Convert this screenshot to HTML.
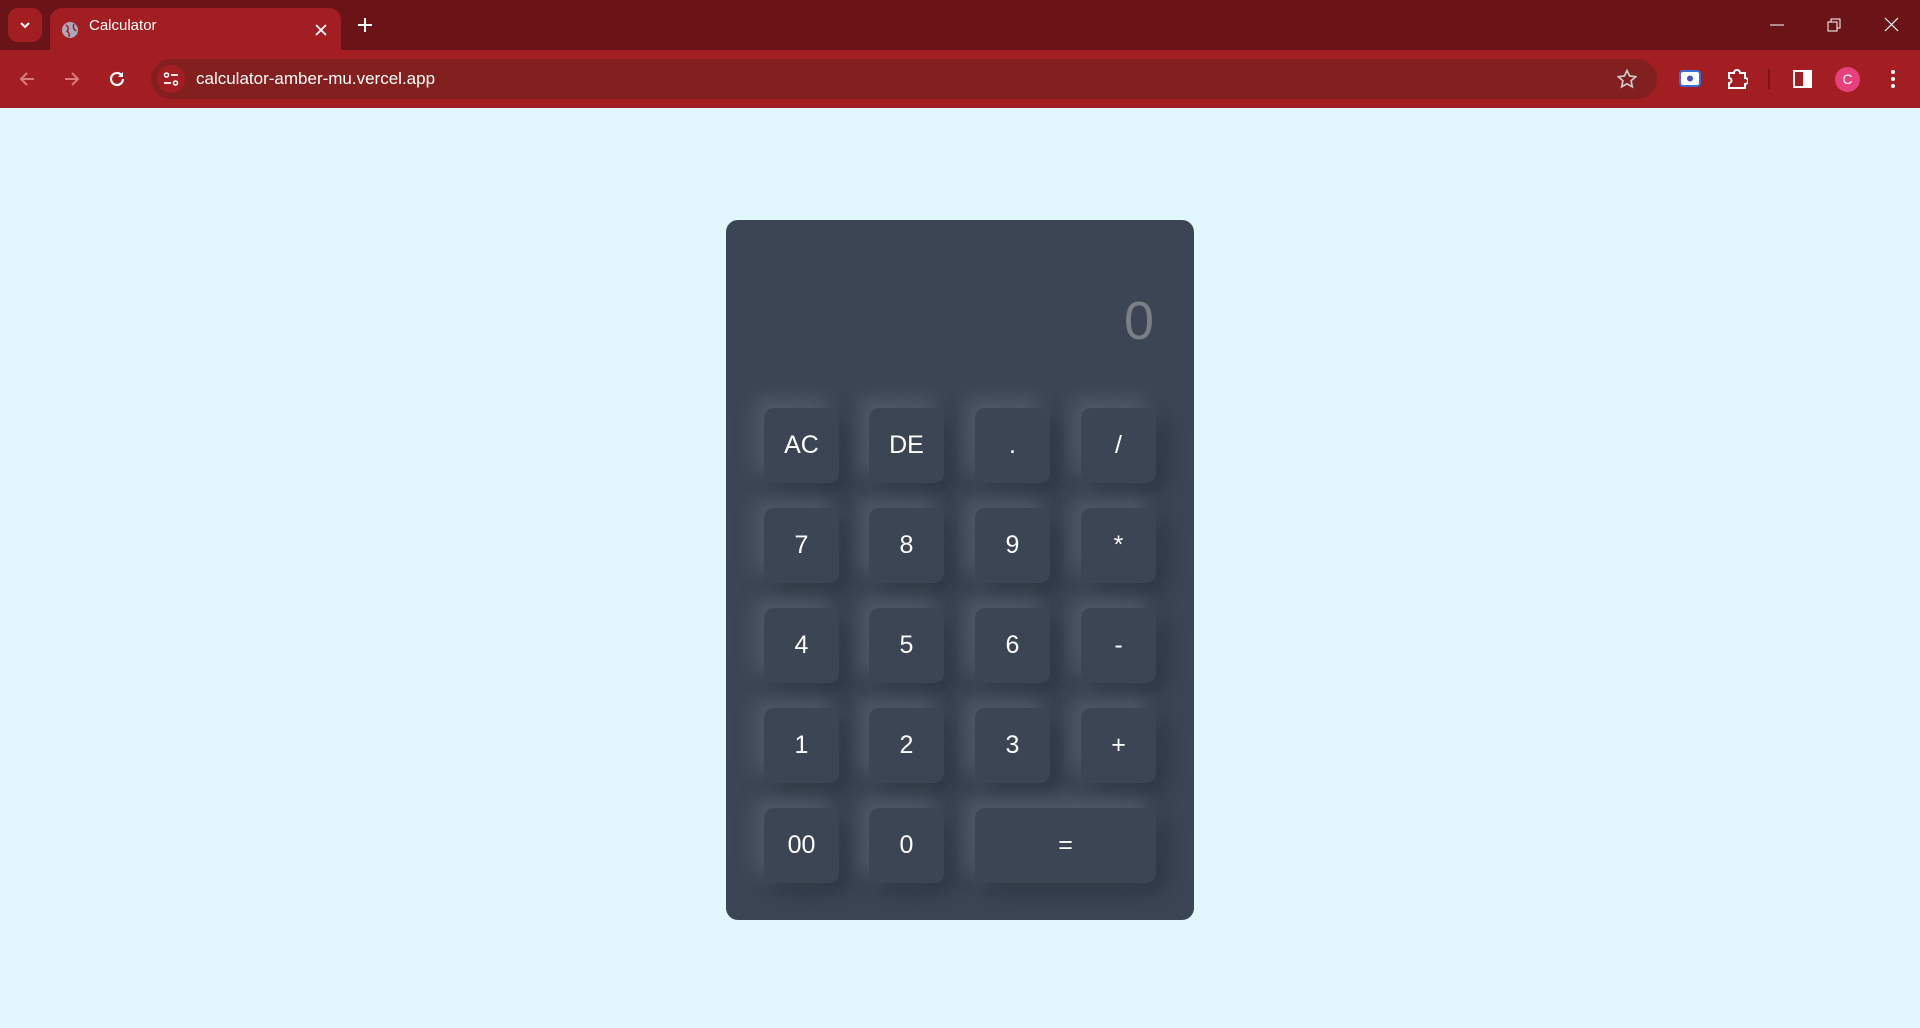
<!DOCTYPE html>
<html><head><meta charset="utf-8"><style>
*{margin:0;padding:0;box-sizing:border-box}
html,body{width:1920px;height:1028px;overflow:hidden;background:#e2f6fe;font-family:"Liberation Sans",Arial,sans-serif}
.top{position:absolute;left:0;top:0;width:1920px;height:50px;background:#6a1418}
.tb{position:absolute;left:0;top:50px;width:1920px;height:58px;background:#a31e22}
.tab{position:absolute;left:50px;top:8px;width:291px;height:44px;background:#a31e22;border-radius:12px 12px 0 0}
.tab span{position:absolute;left:39px;top:9px;color:#fff;font-size:15px}
.addr{position:absolute;left:151px;top:59px;width:1506px;height:40px;border-radius:20px;background:#82201f}
.addr .url{position:absolute;left:45px;top:10px;color:#fff;font-size:17px}
.w{color:#fff;position:absolute}
.card{position:absolute;left:726px;top:220px;width:468px;height:700px;background:#3b4554;border-radius:12px}
.disp{position:absolute;right:40px;top:70px;color:#7a7f85;font-size:54px}
.b{position:absolute;width:75px;height:75px;border-radius:10px;background:#3b4554;color:#fff;font-size:25px;display:flex;align-items:center;justify-content:center;
box-shadow:-9px -9px 20px rgba(115,127,140,0.4),9px 9px 20px rgba(30,36,45,0.45)}
</style></head><body>
<div class="top"></div>
<div style="position:absolute;left:8px;top:8px;width:34px;height:34px;border-radius:10px;background:#a31e22"></div>
<svg class="w" style="left:18px;top:18px" width="14" height="14"><path d="M3 5l4 4 4-4" stroke="#fff" stroke-width="2" fill="none"/></svg>
<div class="tab"><svg style="position:absolute;left:11px;top:13px" width="18" height="18"><circle cx="9" cy="9" r="8" fill="#aab"/><path d="M5 4q4 3 1 6q3 2 2 6M13 3q-2 4 2 7" stroke="#a31e22" stroke-width="1.5" fill="none"/></svg><span>Calculator</span>
<svg style="position:absolute;right:14px;top:16px" width="12" height="12"><path d="M1 1l10 10M11 1L1 11" stroke="#fff" stroke-width="1.8"/></svg></div>
<svg class="w" style="left:358px;top:18px" width="14" height="14"><path d="M7 0v14M0 7h14" stroke="#fff" stroke-width="2"/></svg>
<svg class="w" style="left:1770px;top:24px" width="14" height="2"><path d="M0 1h14" stroke="#fff"/></svg>
<svg class="w" style="left:1827px;top:18px" width="14" height="14"><rect x="1" y="4" width="9" height="9" stroke="#fff" fill="none"/><path d="M4 4V1h9v9h-3" stroke="#fff" fill="none"/></svg>
<svg class="w" style="left:1884px;top:17px" width="15" height="15"><path d="M1 1l13 13M14 1L1 14" stroke="#fff" stroke-width="1.2"/></svg>
<div class="tb"></div>
<svg class="w" style="left:18px;top:70px" width="18" height="18"><path d="M16 9H3M9 3L3 9l6 6" stroke="#d97b7c" stroke-width="2" fill="none"/></svg>
<svg class="w" style="left:63px;top:70px" width="18" height="18"><path d="M2 9h13M9 3l6 6-6 6" stroke="#d97b7c" stroke-width="2" fill="none"/></svg>
<svg class="w" style="left:108px;top:70px" width="18" height="18"><path d="M15 9a6 6 0 1 1-2-4.5" stroke="#fff" stroke-width="2.2" fill="none"/><path d="M15 2v5h-5z" fill="#fff"/></svg>
<div class="addr"><div style="position:absolute;left:6px;top:6px;width:28px;height:28px;border-radius:14px;background:#a31e22"></div>
<svg style="position:absolute;left:12px;top:12px" width="16" height="16"><circle cx="3.5" cy="4" r="2" stroke="#fff" stroke-width="1.5" fill="none"/><path d="M8 4h7M1 12h7" stroke="#fff" stroke-width="1.8"/><circle cx="12.5" cy="12" r="2" stroke="#fff" stroke-width="1.5" fill="none"/></svg>
<div class="url">calculator-amber-mu.vercel.app</div>
<svg style="position:absolute;right:20px;top:10px" width="20" height="20"><path d="M10 1.5l2.6 5.5 6 .7-4.5 4.1 1.2 6-5.3-3-5.3 3 1.2-6L1.4 7.7l6-.7z" stroke="#ccc" stroke-width="1.7" fill="none"/></svg></div>
<svg class="w" style="left:1679px;top:70px" width="22" height="17"><rect x="1" y="1" width="20" height="15" rx="3" fill="#fff" stroke="#3a6fd8" stroke-width="2"/><circle cx="11" cy="8.5" r="3" fill="#4a52c8"/></svg>
<svg class="w" style="left:1726px;top:68px" width="22" height="22"><path d="M3 5h5a3 3 0 0 1 6 0h5v5a3 3 0 0 1 0 6v4H3v-5a2 2 0 0 0 0-5z" stroke="#fff" stroke-width="2" fill="none"/></svg>
<div style="position:absolute;left:1768px;top:69px;width:2px;height:20px;background:#7a1518"></div>
<svg class="w" style="left:1793px;top:70px" width="19" height="18"><rect x="1" y="1" width="17" height="16" stroke="#fff" stroke-width="2" fill="none"/><rect x="10" y="1" width="8" height="16" fill="#fff"/></svg>
<div style="position:absolute;left:1835px;top:67px;width:25px;height:25px;border-radius:13px;background:#e8407a;color:#fff;font-size:14px;text-align:center;line-height:25px">C</div>
<svg class="w" style="left:1890px;top:69px" width="6" height="20"><circle cx="3" cy="3" r="2" fill="#fff"/><circle cx="3" cy="10" r="2" fill="#fff"/><circle cx="3" cy="17" r="2" fill="#fff"/></svg>

<div class="card"><div class="disp">0</div>
<div class="b" style="left:38px;top:188px">AC</div><div class="b" style="left:143px;top:188px">DE</div><div class="b" style="left:249px;top:188px">.</div><div class="b" style="left:355px;top:188px">/</div>
<div class="b" style="left:38px;top:288px">7</div><div class="b" style="left:143px;top:288px">8</div><div class="b" style="left:249px;top:288px">9</div><div class="b" style="left:355px;top:288px">*</div>
<div class="b" style="left:38px;top:388px">4</div><div class="b" style="left:143px;top:388px">5</div><div class="b" style="left:249px;top:388px">6</div><div class="b" style="left:355px;top:388px">-</div>
<div class="b" style="left:38px;top:488px">1</div><div class="b" style="left:143px;top:488px">2</div><div class="b" style="left:249px;top:488px">3</div><div class="b" style="left:355px;top:488px">+</div>
<div class="b" style="left:38px;top:588px">00</div><div class="b" style="left:143px;top:588px">0</div><div class="b" style="left:249px;top:588px;width:181px">=</div>
</div>
</body></html>
